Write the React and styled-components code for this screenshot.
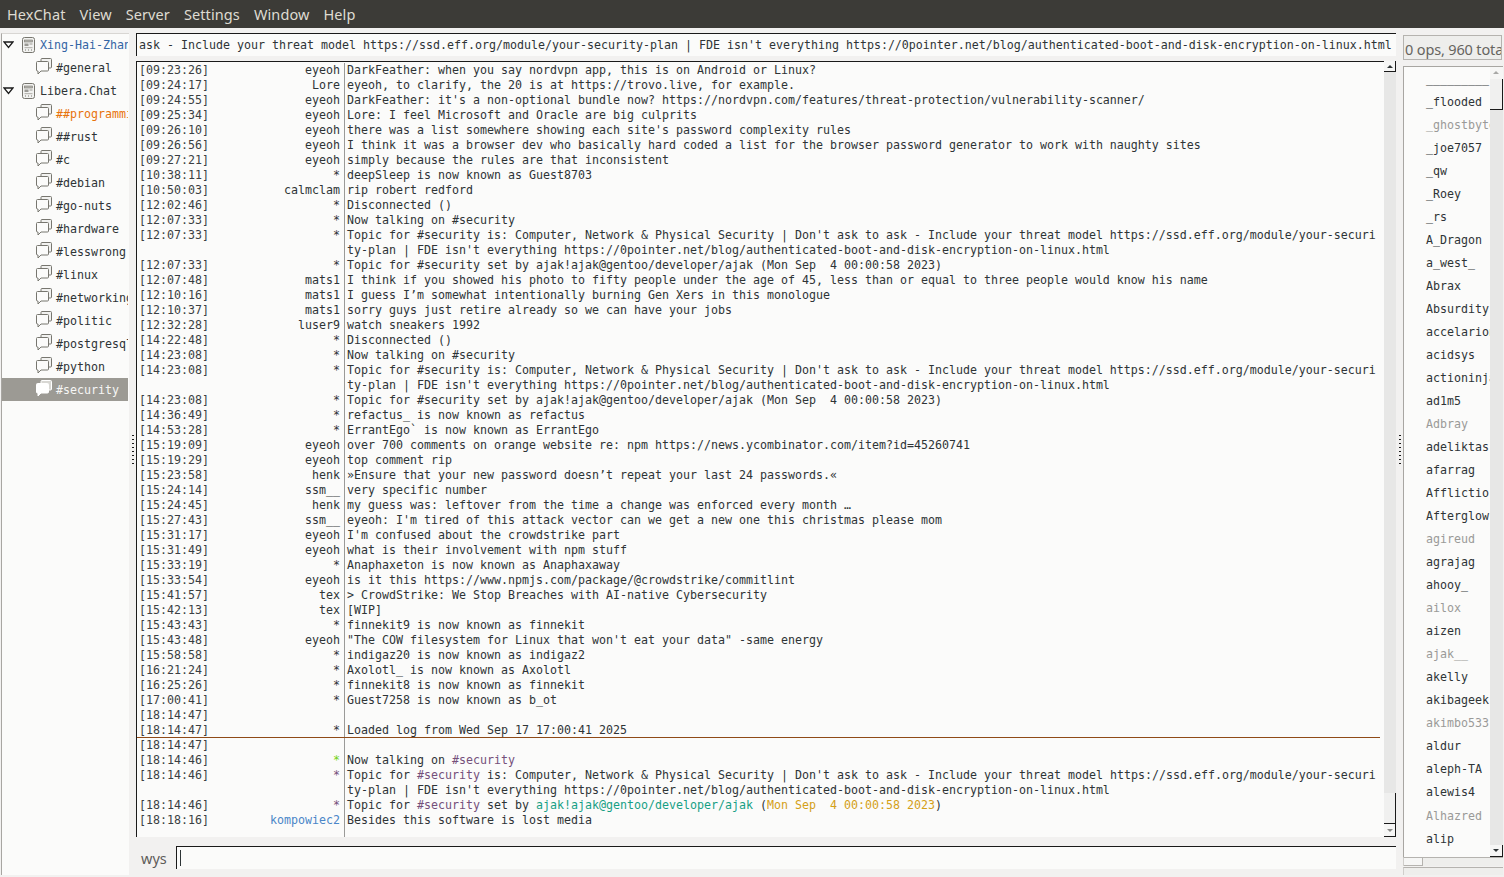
import React from 'react'
import styled, { createGlobalStyle } from 'styled-components'

const mono = `"DejaVu Sans Mono", "Liberation Mono", monospace`
const ui = `"Noto Sans", "Open Sans", sans-serif`

const Global = createGlobalStyle`
  html, body { margin: 0; padding: 0; height: 100%; overflow: hidden; background: #f2f1f0; }
  #root { height: 100%; }
  * { box-sizing: border-box; }
`

const Page = styled.div`
  height: 877px;
  display: flex;
  flex-direction: column;
  background: #f2f1f0;
`
const MenuBar = styled.div`
  height: 28px;
  background: #3c3b37;
  display: flex;
  align-items: center;
  font-family: ${ui};
  font-size: 14.5px;
  letter-spacing: 0.1px;
  color: #dfdbd2;
`
const MenuItem = styled.div`
  padding: 0 7px;
`
const Main = styled.div`
  flex: 1;
  min-height: 0;
  display: flex;
`
const Tree = styled.div`
  width: 128px;
  margin: 5px 0 2px 1px;
  background: #fbfbfa;
  border-left: 1px solid #a8a6a2;
  border-top: 1px solid #d8d6d3;
  overflow: hidden;
  font-family: ${mono};
  font-size: 11.63px;
`
const TreeRow = styled.div`
  height: 23px;
  margin-top: ${p => (p.$first ? '-1px' : '0')};
  width: 126px;
  display: flex;
  align-items: center;
  white-space: nowrap;
  overflow: hidden;
  padding-left: ${p => (p.$server ? '1px' : '34px')};
  background: ${p => (p.$selected ? '#9c9a94' : 'transparent')};
  color: ${p => (p.$selected ? '#f6f6f4' : p.$color || '#2e3436')};
`
const RowIcon = styled.svg`
  flex: none;
  margin-right: 4px;
  margin-bottom: ${p => p.$lift || 0}px;
`
const Expander = styled.svg`
  flex: none;
  margin-right: 7px;
`
const Handle = styled.div`
  flex: none;
  width: ${p => p.$width}px;
  display: flex;
  align-items: center;
  justify-content: center;
  padding-bottom: 4px;
`
const Grip = styled.div`
  width: 2px;
  height: 32px;
  background: repeating-linear-gradient(#1a1a1a 0 1px, transparent 1px 4px);
`
const Center = styled.div`
  width: 1260px;
  flex: none;
  display: flex;
  flex-direction: column;
  padding-top: 5px;
`
const Topic = styled.div`
  height: 23px;
  flex: none;
  background: #fbfbfa;
  border-left: 1px solid #1a1a1a;
  border-top: 1px solid #1a1a1a;
  padding-left: 2px;
  font-family: ${mono};
  font-size: 11.63px;
  line-height: 22px;
  color: #2e3436;
  white-space: nowrap;
  overflow: hidden;
`
const ChatWrap = styled.div`
  flex: none;
  height: 776px;
  margin-top: 5px;
  display: flex;
`
const Log = styled.div`
  flex: 1;
  min-width: 0;
  padding: 1px 4px 0 0;
  background: #fbfbfa;
  border-left: 1px solid #1a1a1a;
  border-top: 1px solid #1a1a1a;
  font-family: ${mono};
  font-size: 11.63px;
  line-height: 15px;
  color: #2e3436;
  overflow: hidden;
`
const Lines = styled.div`
  height: 100%;
  background: linear-gradient(#9a9a98, #9a9a98) no-repeat 207px 0 / 1px 100%;
`
const Line = styled.div`
  display: grid;
  grid-template-columns: 2px 68px 133px 4px 1fr;
  box-shadow: ${p => (p.$marker ? 'inset 0 -1px 0 #8f4a17' : 'none')};
`
const Time = styled.span`
  grid-column: 2;
  color: #3a3f42;
  white-space: pre;
`
const Nick = styled.span`
  grid-column: 3;
  text-align: right;
  color: ${p => p.$color || '#2e3436'};
`
const Message = styled.span`
  grid-column: 5;
  padding-left: 3px;
  white-space: pre-wrap;
  word-break: break-all;
`
const Tone = styled.span`
  color: ${p => p.$color};
`
const VScroll = styled.div`
  flex: none;
  width: ${p => p.$width}px;
  background: #e7e7e6;
  display: flex;
  flex-direction: column;
`
const ScrollButton = styled.div`
  height: ${p => p.$height}px;
  flex: none;
  display: flex;
  align-items: center;
  justify-content: center;
  background: #f6f6f5;
  border-right: 1px solid ${p => (p.$flat ? '#f6f6f5' : '#1a1a1a')};
  border-bottom: 1px solid ${p => (p.$flat ? '#f6f6f5' : '#1a1a1a')};
`
const Arrow = styled.div`
  width: 0;
  height: 0;
  border-left: 3px solid transparent;
  border-right: 3px solid transparent;
  border-${p => (p.$up ? 'bottom' : 'top')}: 3px solid ${p => p.$color};
`
const Thumb = styled.div`
  height: ${p => p.$height}px;
  flex: none;
  background: #f0f0ef;
  border-right: 1px solid #1a1a1a;
  border-bottom: 1px solid #1a1a1a;
`
const Spacer = styled.div`
  flex: 1;
`
const InputRow = styled.div`
  flex: none;
  height: 36px;
  display: flex;
  align-items: flex-end;
  padding-bottom: 3px;
`
const InputLabel = styled.div`
  flex: none;
  width: 40px;
  padding-left: 5px;
  font-family: ${ui};
  font-size: 14.5px;
  line-height: 24px;
  color: #5e5c5a;
`
const InputBox = styled.div`
  flex: 1;
  height: 23px;
  margin-bottom: 1px;
  background: #fbfbfa;
  border-left: 1px solid #1a1a1a;
  border-top: 1px solid #1a1a1a;
  padding: 3px 0 0 3px;
`
const Caret = styled.div`
  width: 1px;
  height: 16px;
  background: #2e3436;
`
const Side = styled.div`
  width: 99px;
  flex: none;
  display: flex;
  flex-direction: column;
  padding-top: 7px;
`
const Count = styled.div`
  height: 25px;
  flex: none;
  background: #eeeeec;
  border: 1px solid #b5b3af;
  padding-left: 1px;
  font-family: ${ui};
  font-size: 14.5px;
  letter-spacing: -0.15px;
  line-height: 27px;
  color: #67655f;
  white-space: nowrap;
  overflow: hidden;
`
const UserWrap = styled.div`
  flex: none;
  height: 791px;
  margin-top: 6px;
  width: 100px;
  display: flex;
  border-left: 1px solid #a8a6a2;
  border-top: 1px solid #a8a6a2;
`
const Users = styled.div`
  flex: 1;
  min-width: 0;
  padding-top: 1px;
  background: #fbfbfa;
  overflow: hidden;
  font-family: ${mono};
  font-size: 11.63px;
`
const User = styled.div`
  height: 23.02px;
  line-height: 23px;
  padding-left: 22px;
  white-space: nowrap;
  overflow: hidden;
  color: ${p => (p.$away ? '#9a9a98' : '#2e3436')};
`
const HBar = styled.div`
  height: ${p => p.$height}px;
  flex: none;
  margin-top: ${p => p.$top}px;
  width: 100px;
  background: #eeeeec;
  border-top: 1px solid #b5b3af;
  border-left: 1px solid #d0cecb;
`
const HThumb = styled.div`
  width: 19px;
  height: 100%;
  background: #f6f6f5;
  border-right: 1px solid #b5b3af;
  border-bottom: 1px solid #b5b3af;
`

const ServerIcon = () => (
  <RowIcon width="15" height="16" viewBox="0 0 15 16" fill="none">
    <rect x="1.5" y="0.5" width="12" height="15" rx="2" fill="#f2f2f0" stroke="#77766f" />
    <rect x="3.5" y="3" width="8" height="2" fill="#b9b8b3" stroke="#77766f" strokeWidth="0.6" />
    <rect x="3.5" y="6.5" width="4" height="2.5" fill="#9a9994" />
    <rect x="8.5" y="6.5" width="3" height="1" fill="#9a9994" />
    <rect x="3.5" y="10" width="8" height="1.2" fill="#b9b8b3" />
    <path d="M4 13h1M7 13h1M10 13h1" stroke="#77766f" />
  </RowIcon>
)

const ChatIcon = ({ selected }) => {
  const line = selected ? '#ffffff' : '#77766f'
  return (
    <RowIcon $lift={2} width="16" height="17" viewBox="0 0 16 17" fill="none">
      <path d="M5 3V1.5A1 1 0 0 1 6 .5h8.500a1 1 0 0 1 1 1V9a1 1 0 0 1-1 1H13" stroke={line} fill={selected ? '#d8d7d3' : '#f2f2f0'} />
      <path d="M1.500 3.500h10a1 1 0 0 1 1 1V12a1 1 0 0 1-1 1H5l-3 3v-3H1.500a1 1 0 0 1-1-1V4.500a1 1 0 0 1 1-1z" stroke={line} fill={selected ? '#ffffff' : '#fbfbfa'} />
    </RowIcon>
  )
}

const TreeArrow = () => (
  <Expander width="11" height="8" viewBox="0 0 11 8">
    <path d="M1 1h9L5.500 6.500z" fill="#fbfbfa" stroke="#1a1a1a" strokeWidth="1.300" />
  </Expander>
)

const tree = [
  { name: 'Xing-Hai-Zhang', server: true, color: '#3465a4' },
  { name: '#general' },
  { name: 'Libera.Chat', server: true },
  { name: '##programming', color: '#e8730c' },
  { name: '##rust' },
  { name: '#c' },
  { name: '#debian' },
  { name: '#go-nuts' },
  { name: '#hardware' },
  { name: '#lesswrong' },
  { name: '#linux' },
  { name: '#networking' },
  { name: '#politic' },
  { name: '#postgresql' },
  { name: '#python' },
  { name: '#security', selected: true },
]

const topicOne = "Topic for #security is: Computer, Network & Physical Security | Don't ask to ask - Include your threat model https://ssd.eff.org/module/your-security-plan | FDE isn't everything https://0pointer.net/blog/authenticated-boot-and-disk-encryption-on-linux.html"
const topicSet = 'Topic for #security set by ajak!ajak@gentoo/developer/ajak (Mon Sep  4 00:00:58 2023)'

const purple = '#75507b'
const teal = '#16a085'
const amber = '#d4a017'

const log = [
  ['09:23:26', 'eyeoh', 'DarkFeather: when you say nordvpn app, this is on Android or Linux?'],
  ['09:24:17', 'Lore', 'eyeoh, to clarify, the 20 is at https://trovo.live, for example.'],
  ['09:24:55', 'eyeoh', "DarkFeather: it's a non-optional bundle now? https://nordvpn.com/features/threat-protection/vulnerability-scanner/"],
  ['09:25:34', 'eyeoh', 'Lore: I feel Microsoft and Oracle are big culprits'],
  ['09:26:10', 'eyeoh', "there was a list somewhere showing each site's password complexity rules"],
  ['09:26:56', 'eyeoh', 'I think it was a browser dev who basically hard coded a list for the browser password generator to work with naughty sites'],
  ['09:27:21', 'eyeoh', 'simply because the rules are that inconsistent'],
  ['10:38:11', '*', 'deepSleep is now known as Guest8703'],
  ['10:50:03', 'calmclam', 'rip robert redford'],
  ['12:02:46', '*', 'Disconnected ()'],
  ['12:07:33', '*', 'Now talking on #security'],
  ['12:07:33', '*', topicOne],
  ['12:07:33', '*', topicSet],
  ['12:07:48', 'mats1', 'I think if you showed his photo to fifty people under the age of 45, less than or equal to three people would know his name'],
  ['12:10:16', 'mats1', 'I guess I’m somewhat intentionally burning Gen Xers in this monologue'],
  ['12:10:37', 'mats1', 'sorry guys just retire already so we can have your jobs'],
  ['12:32:28', 'luser9', 'watch sneakers 1992'],
  ['14:22:48', '*', 'Disconnected ()'],
  ['14:23:08', '*', 'Now talking on #security'],
  ['14:23:08', '*', topicOne],
  ['14:23:08', '*', topicSet],
  ['14:36:49', '*', 'refactus_ is now known as refactus'],
  ['14:53:28', '*', 'ErrantEgo` is now known as ErrantEgo'],
  ['15:19:09', 'eyeoh', 'over 700 comments on orange website re: npm https://news.ycombinator.com/item?id=45260741'],
  ['15:19:29', 'eyeoh', 'top comment rip'],
  ['15:23:58', 'henk', '»Ensure that your new password doesn’t repeat your last 24 passwords.«'],
  ['15:24:14', 'ssm__', 'very specific number'],
  ['15:24:45', 'henk', 'my guess was: leftover from the time a change was enforced every month …'],
  ['15:27:43', 'ssm__', "eyeoh: I'm tired of this attack vector can we get a new one this christmas please mom"],
  ['15:31:17', 'eyeoh', "I'm confused about the crowdstrike part"],
  ['15:31:49', 'eyeoh', 'what is their involvement with npm stuff'],
  ['15:33:19', '*', 'Anaphaxeton is now known as Anaphaxaway'],
  ['15:33:54', 'eyeoh', 'is it this https://www.npmjs.com/package/@crowdstrike/commitlint'],
  ['15:41:57', 'tex', '> CrowdStrike: We Stop Breaches with AI-native Cybersecurity'],
  ['15:42:13', 'tex', '[WIP]'],
  ['15:43:43', '*', 'finnekit9 is now known as finnekit'],
  ['15:43:48', 'eyeoh', '"The COW filesystem for Linux that won\'t eat your data" -same energy'],
  ['15:58:58', '*', 'indigaz20 is now known as indigaz2'],
  ['16:21:24', '*', 'Axolotl_ is now known as Axolotl'],
  ['16:25:26', '*', 'finnekit8 is now known as finnekit'],
  ['17:00:41', '*', 'Guest7258 is now known as b_ot'],
  ['18:14:47', '', ' '],
  ['18:14:47', '*', 'Loaded log from Wed Sep 17 17:00:41 2025', { marker: true }],
  ['18:14:47', '', ' '],
  ['18:14:46', '*', ['Now talking on ', [purple, '#security']], { nick: '#73d216' }],
  ['18:14:46', '*', ['Topic for ', [purple, '#security'], " is: Computer, Network & Physical Security | Don't ask to ask - Include your threat model https://ssd.eff.org/module/your-security-plan | FDE isn't everything https://0pointer.net/blog/authenticated-boot-and-disk-encryption-on-linux.html"], { nick: purple }],
  ['18:14:46', '*', ['Topic for ', [purple, '#security'], ' set by ', [teal, 'ajak!ajak@gentoo/developer/ajak'], ' (', [amber, 'Mon Sep  4 00:00:58 2023'], ')'], { nick: purple }],
  ['18:18:16', 'kompowiec2', 'Besides this software is lost media', { nick: '#4a86c8' }],
]

const users = [
  ['_________'], ['_flooded'], ['_ghostbyte', 1], ['_joe7057'], ['_qw'], ['_Roey'], ['_rs'], ['A_Dragon'], ['a_west_'],
  ['Abrax'], ['Absurdity'], ['accelarion'], ['acidsys'], ['actioninja'], ['ad1m5'], ['Adbray', 1], ['adeliktas'],
  ['afarrag'], ['Afflictio'], ['Afterglow'], ['agireud', 1], ['agrajag'], ['ahooy_'], ['ailox', 1], ['aizen'],
  ['ajak__', 1], ['akelly'], ['akibageek'], ['akimbo533', 1], ['aldur'], ['aleph-TA'], ['alewis4'], ['Alhazred', 1],
  ['alip'], ['alive'],
]

const renderMessage = msg =>
  Array.isArray(msg)
    ? msg.map((part, i) =>
        Array.isArray(part) ? <Tone key={i} $color={part[0]}>{part[1]}</Tone> : <span key={i}>{part}</span>
      )
    : msg

const App = () => {
  return (
    <Page>
      <Global />
      <MenuBar>
        {['HexChat', 'View', 'Server', 'Settings', 'Window', 'Help'].map(m => (
          <MenuItem key={m}>{m}</MenuItem>
        ))}
      </MenuBar>
      <Main>
        <Tree>
          {tree.map((t, i) => (
            <TreeRow key={t.name} $first={i === 0} $server={t.server} $selected={t.selected} $color={t.color}>
              {t.server ? <TreeArrow /> : null}
              {t.server ? <ServerIcon /> : <ChatIcon selected={t.selected} />}
              {t.name}
            </TreeRow>
          ))}
        </Tree>
        <Handle $width={7}>
          <Grip />
        </Handle>
        <Center>
          <Topic>ask - Include your threat model https://ssd.eff.org/module/your-security-plan | FDE isn't everything https://0pointer.net/blog/authenticated-boot-and-disk-encryption-on-linux.html</Topic>
          <ChatWrap>
            <Log>
              <Lines>
                {log.map(([time, nick, msg, opts = {}], i) => (
                  <Line key={i} $marker={opts.marker}>
                    <Time>[{time}]</Time>
                    <Nick $color={opts.nick}>{nick}</Nick>
                    <Message>{renderMessage(msg)}</Message>
                  </Line>
                ))}
              </Lines>
            </Log>
            <VScroll $width={12}>
              <ScrollButton $height={11}><Arrow $up $color="#2e3436" /></ScrollButton>
              <Spacer />
              <Thumb $height={31} />
              <ScrollButton $height={13}><Arrow $color="#8a8a88" /></ScrollButton>
            </VScroll>
          </ChatWrap>
          <InputRow>
            <InputLabel>wys</InputLabel>
            <InputBox><Caret /></InputBox>
          </InputRow>
        </Center>
        <Handle $width={7}>
          <Grip />
        </Handle>
        <Side>
          <Count>0 ops, 960 total</Count>
          <UserWrap>
            <Users>
              {users.map(([name, away]) => (
                <User key={name} $away={away}>{name}</User>
              ))}
            </Users>
            <VScroll $width={13}>
              <ScrollButton $height={12} $flat><Arrow $up $color="#a8a8a6" /></ScrollButton>
              <Thumb $height={31} />
              <Spacer />
              <ScrollButton $height={12}><Arrow $color="#2e3436" /></ScrollButton>
            </VScroll>
          </UserWrap>
          <HBar $height={9} $top={0}><HThumb /></HBar>
          <HBar $height={8} $top={1} />
        </Side>
      </Main>
    </Page>
  )
}

export default App
